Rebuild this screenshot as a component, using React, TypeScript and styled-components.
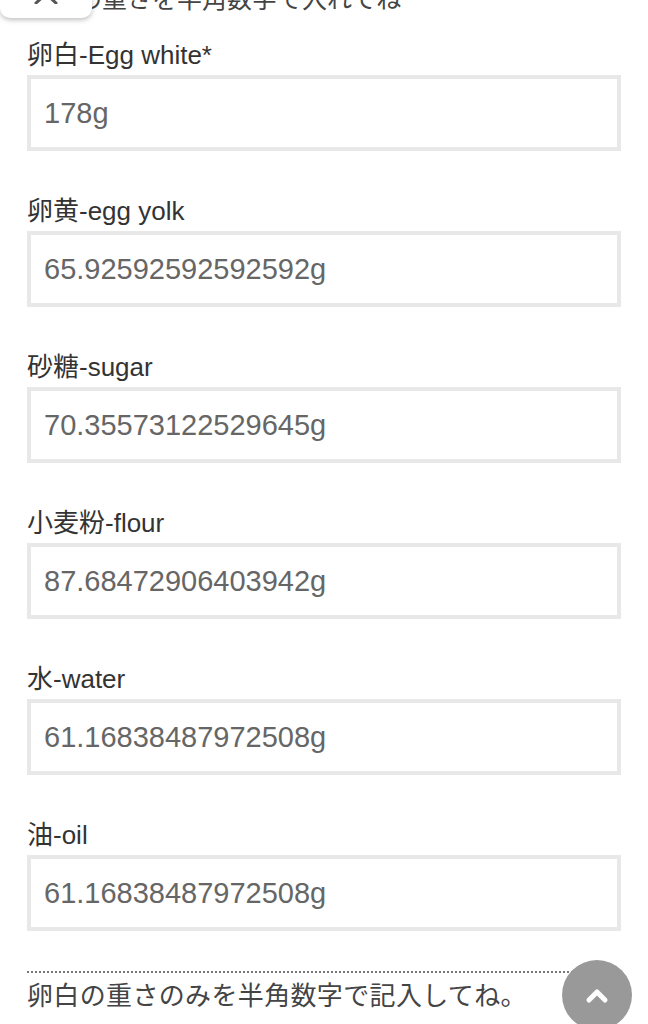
import React from "react";
import styled, { createGlobalStyle } from "styled-components";

const Global = createGlobalStyle`
  html, body { margin: 0; padding: 0; background: #ffffff; }
  body {
    font-family: "Liberation Sans", Arial, "Noto Sans CJK JP", sans-serif;
    color: #333333;
    overflow: hidden;
  }
`;

const Page = styled.main`
  position: relative;
  padding: 0 27px;
  height: 1024px;
  overflow: hidden;
`;

const Intro = styled.p`
  margin: -15px 0 28px;
  font-size: 25px;
  line-height: 28px;
  color: #444;
  white-space: nowrap;
`;

const Field = styled.div`
  margin-bottom: 46px;
`;

const Label = styled.label`
  display: block;
  font-size: 26px;
  line-height: 28px;
  margin-bottom: 6px;
  color: #333;
`;

const Input = styled.input`
  display: block;
  box-sizing: border-box;
  width: 100%;
  height: 76px;
  border: 4px solid #e8e8e8;
  background: #fff;
  padding: 0 13px;
  font-family: "Liberation Sans", Arial, sans-serif;
  font-size: 29px;
  color: #666;
  outline: none;
  border-radius: 0;
`;

const Note = styled.p`
  margin: -6px 0 0;
  padding-top: 8px;
  border-top: 2px dotted #777;
  font-size: 26px;
  line-height: 30px;
  letter-spacing: 0.35px;
  color: #444;
`;

const TopTab = styled.button`
  position: absolute;
  left: 0;
  top: -20px;
  width: 92px;
  height: 38px;
  background: #fff;
  border: none;
  border-radius: 0 0 10px 10px;
  box-shadow: 0 2px 5px rgba(0, 0, 0, 0.25);
  display: flex;
  justify-content: center;
  align-items: flex-end;
  padding: 0 0 14px;
`;

const ScrollTop = styled.button`
  position: absolute;
  left: 562px;
  top: 960px;
  width: 70px;
  height: 70px;
  border-radius: 50%;
  background: #999;
  border: none;
  display: flex;
  align-items: center;
  justify-content: center;
  padding: 0;
`;

const fields = [
  ["卵白-Egg white*", "178g"],
  ["卵黄-egg yolk", "65.92592592592592g"],
  ["砂糖-sugar", "70.35573122529645g"],
  ["小麦粉-flour", "87.68472906403942g"],
  ["水-water", "61.16838487972508g"],
  ["油-oil", "61.16838487972508g"],
];

export default function App() {
  return (
    <>
      <Global />
      <Page>
        <Intro>卵白の重さを半角数字で入れてね</Intro>
        {fields.map(([label, value]) => (
          <Field key={label}>
            <Label>{label}</Label>
            <Input readOnly value={value} />
          </Field>
        ))}
        <Note>卵白の重さのみを半角数字で記入してね。</Note>
        <TopTab aria-label="close">
          <svg width="24" height="12" viewBox="0 0 24 12">
            <path d="M2 11 L12 2 L22 11" fill="none" stroke="#555" strokeWidth="3" strokeLinecap="round" strokeLinejoin="round" />
          </svg>
        </TopTab>
        <ScrollTop aria-label="scroll to top">
          <svg width="24" height="16" viewBox="0 0 24 16" style={{ marginTop: 2 }}>
            <path d="M4 12 L12 4 L20 12" fill="none" stroke="#fff" strokeWidth="5" strokeLinecap="round" strokeLinejoin="round" />
          </svg>
        </ScrollTop>
      </Page>
    </>
  );
}
